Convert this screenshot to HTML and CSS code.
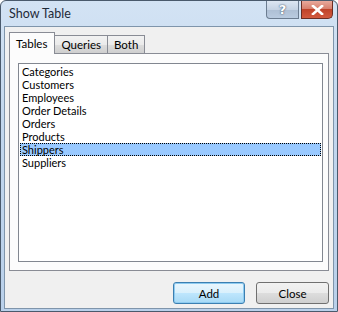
FILE: index.html
```html
<!DOCTYPE html>
<html>
<head>
<meta charset="utf-8">
<link rel="stylesheet" href="styles.css">
</head>
<body>
<div class="window">
  <div class="titlebar">
    <span class="title">Show Table</span>
    <div class="controls">
      <div class="cbtn help">?</div>
      <div class="cbtn close">
        <svg width="13" height="10" viewBox="0 0 13 10"><path d="M2 1 L11 9 M11 1 L2 9" stroke="#fff" stroke-width="2.6" stroke-linecap="square"/></svg>
      </div>
    </div>
  </div>
  <div class="client">
    <div class="tabs">
      <div class="tab active">Tables</div>
      <div class="tab">Queries</div>
      <div class="tab">Both</div>
    </div>
    <div class="panel">
      <div class="listbox">
        <div class="item">Categories</div>
        <div class="item">Customers</div>
        <div class="item">Employees</div>
        <div class="item">Order Details</div>
        <div class="item">Orders</div>
        <div class="item">Products</div>
        <div class="item selected">Shippers</div>
        <div class="item">Suppliers</div>
      </div>
    </div>
    <div class="buttons">
      <div class="btn default">Add</div>
      <div class="btn">Close</div>
    </div>
  </div>
</div>
</body>
</html>
```
FILE: styles.css
```css
* { box-sizing: border-box; }
html, body { margin: 0; padding: 0; background: #fff; }
body { font-family: Lato, "Open Sans", sans-serif; font-size: 11.5px; color: #000; }
.window {
  width: 338px; height: 312px;
  background: linear-gradient(180deg, #d3e3f4 0%, #c2d7ee 40%, #b9d0ea 100%);
  border: 1px solid #4a5a6c;
  border-radius: 6px 6px 0 0;
  display: flex; flex-direction: column;
  padding: 0 3px 3px 3px;
}
.titlebar { height: 25px; display: flex; align-items: flex-start; justify-content: space-between; flex: none; }
.title { padding: 5px 0 0 5px; font-size: 12.5px; color: #1e2a38; }
.controls { display: flex; gap: 2px; margin-right: 1px; }
.cbtn { height: 18px; border: 1px solid #6b7c90; border-top: none; display: flex; align-items: center; justify-content: center; }
.help { width: 33px; background: linear-gradient(180deg, #dce6f2 0%, #c5d3e4 50%, #aebfd4 52%, #b9cbe0 100%); color: #fff; font-family: "DejaVu Sans", sans-serif; font-weight: bold; font-size: 13px; text-shadow: 0 0 2px #4b5d75, 0 0 1px #4b5d75; border-radius: 0 0 0 4px; }
.close { width: 32px; background: linear-gradient(180deg, #e9a99c 0%, #d7806e 45%, #c0432a 50%, #d25a3f 100%); border-color: #6b2d24; border-radius: 0 0 5px 0; }
.client {
  flex: 1; background: #f0f0f0;
  border: 1px solid #7f95ab;
  padding: 5px 4px 4px 4px;
  display: flex; flex-direction: column;
}
.tabs { display: flex; align-items: flex-end; height: 21px; position: relative; z-index: 1; }
.tab { height: 18px; padding: 0 6px; border: 1px solid #898c95; border-bottom: none; background: linear-gradient(180deg, #f2f2f2 0%, #ebebeb 50%, #dddddd 51%, #cfcfcf 100%); line-height: 17px; margin-left: -1px; }
.tab.active { background: #fcfcfc; padding: 2px 7px 0 6px; margin-left: 0; margin-bottom: -1px; height: 22px; }
.panel { height: 218px; border: 1px solid #898c95; background: #fcfcfc; padding: 9px 5px 8px 8px; }
.listbox { height: 100%; border: 1px solid #828790; background: #fff; padding: 1px 1px; }
.item { height: 13px; line-height: 13px; padding-left: 2px; white-space: nowrap; font-size: 11px; }
.item.selected { background: #99c9ff; outline: 1px dotted #000; outline-offset: -1px; }
.buttons { display: flex; justify-content: flex-end; gap: 11px; margin-top: 11px; }
.btn { width: 73px; height: 22px; border: 1px solid #707070; border-radius: 3px; background: linear-gradient(180deg, #f2f2f2 0%, #ebebeb 50%, #dddddd 51%, #cfcfcf 100%); display: flex; align-items: center; justify-content: center; }
.btn.default { width: 72px; border-color: #3c7fb1; background: linear-gradient(180deg, #eaf6fd 0%, #d9f0fc 50%, #bee6fd 51%, #a7d9f5 100%); box-shadow: inset 0 0 0 1px #8ecbf0; }
```
